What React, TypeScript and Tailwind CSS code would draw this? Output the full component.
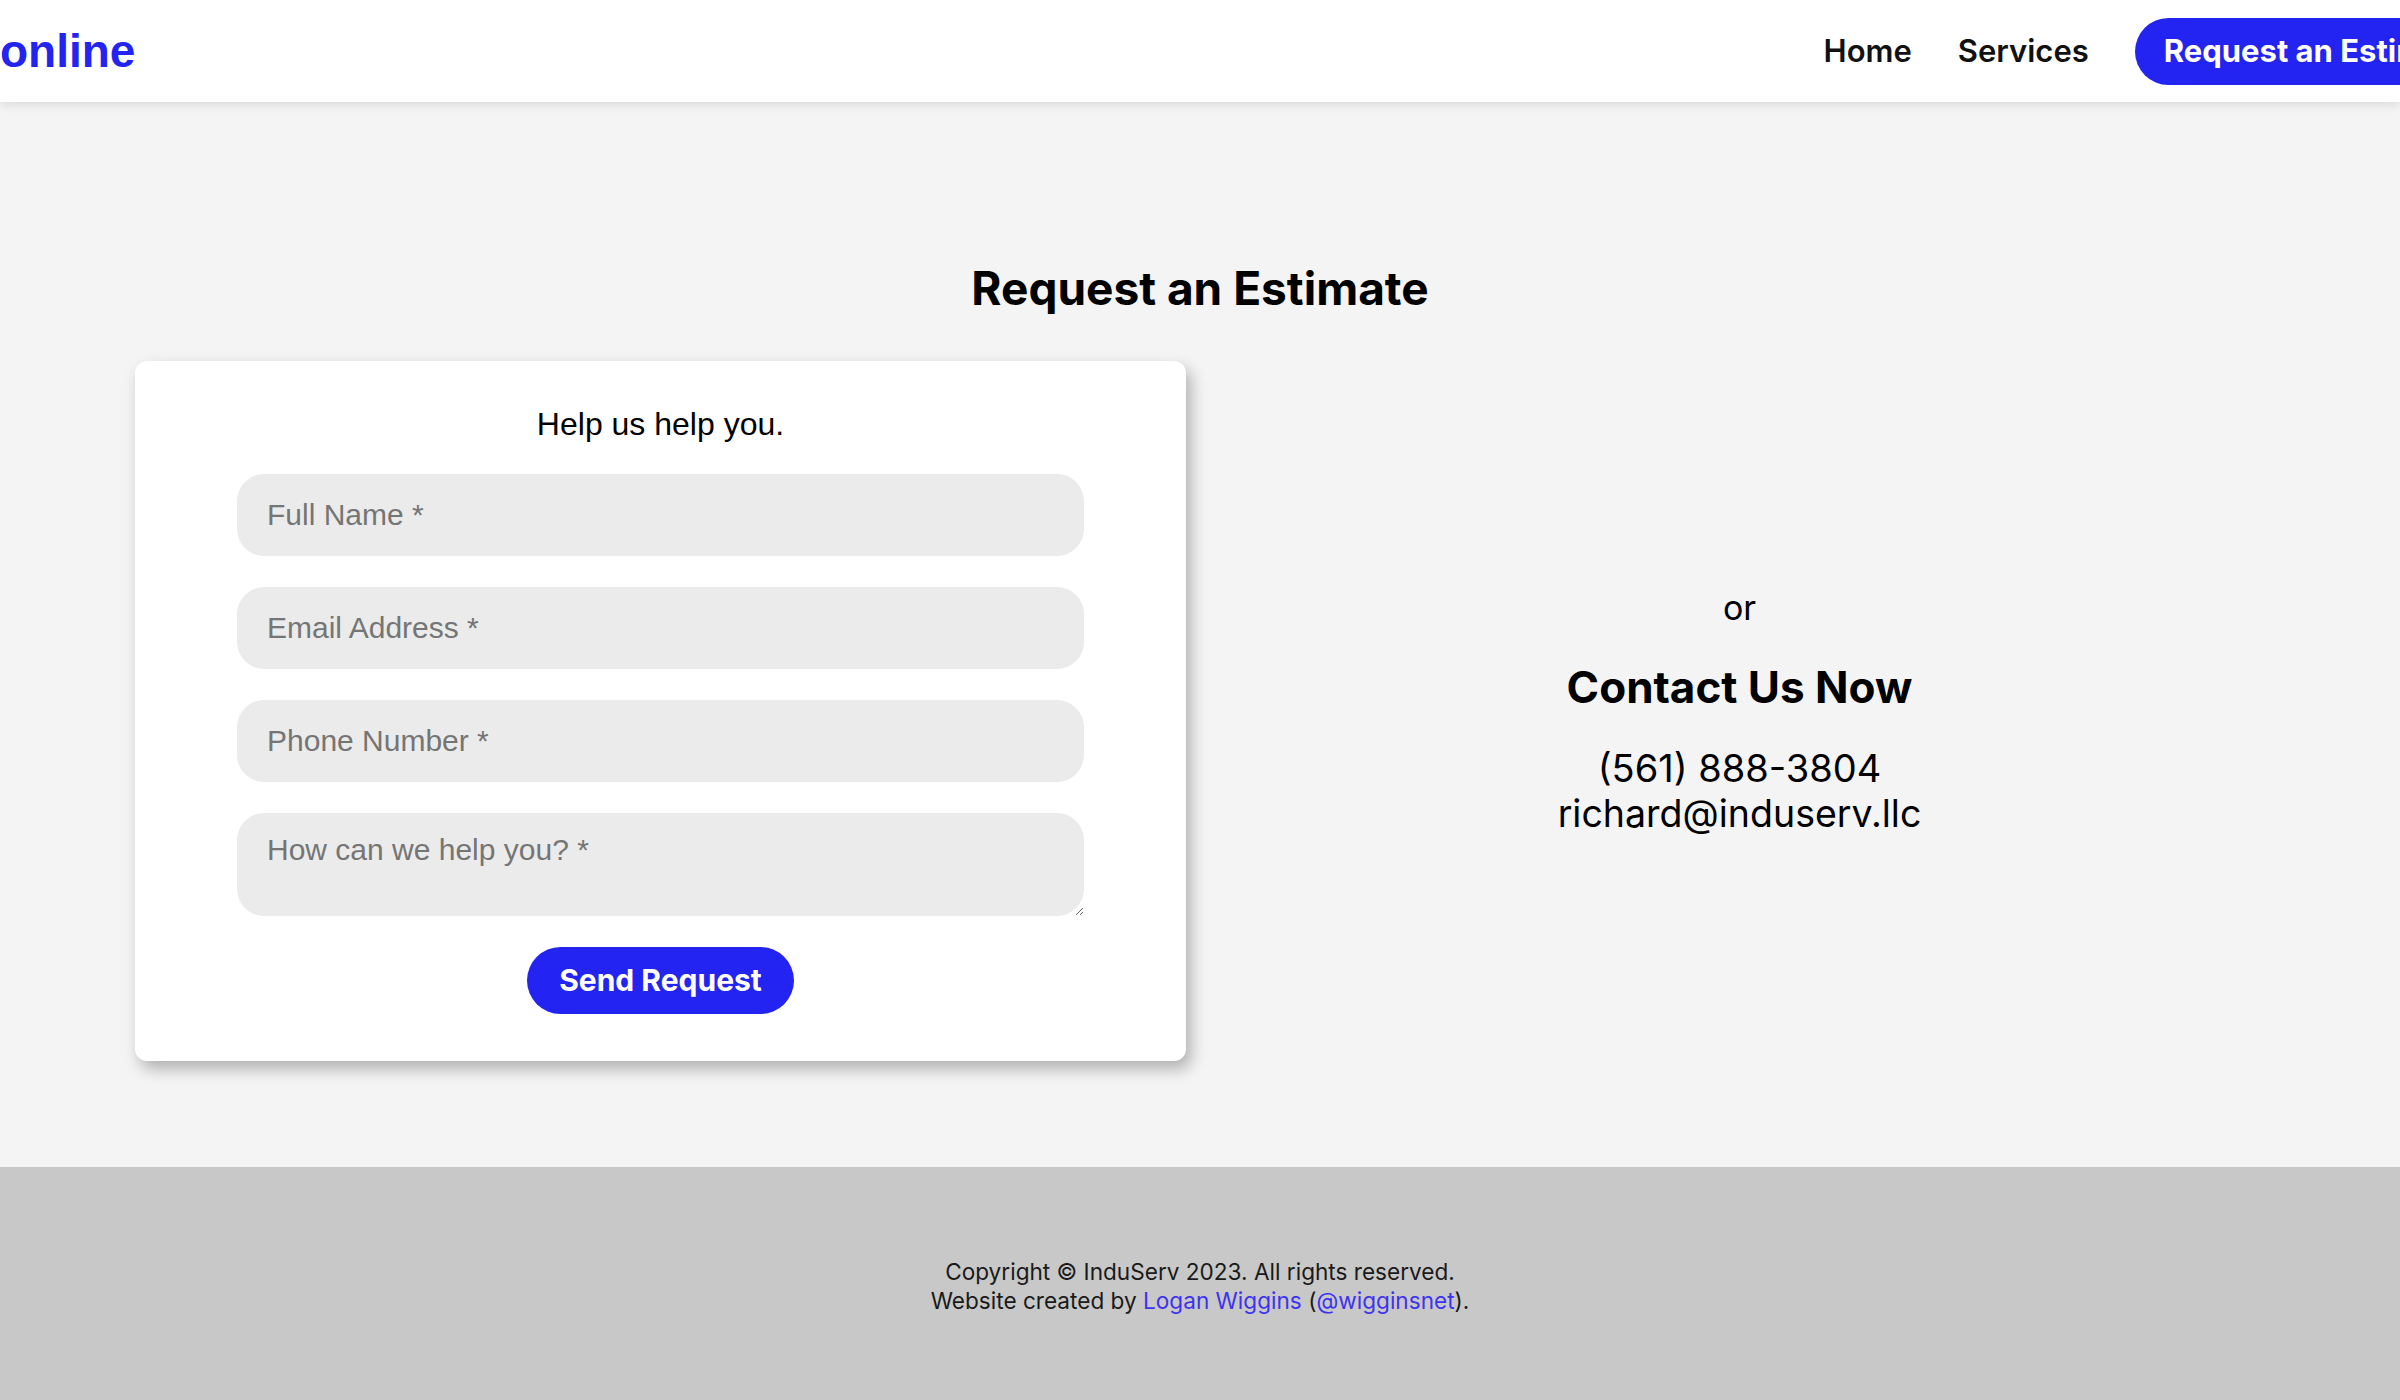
import React from "react";

const inter = "font-['Inter',sans-serif]";
const arial = "font-['Liberation_Sans',Arial,sans-serif]";

export default function App() {
  return (
    <div className={`w-full min-h-screen overflow-hidden bg-[#f4f4f4] ${inter}`}>
      <header className="relative z-10 flex h-[102px] items-center overflow-hidden bg-white shadow-[0_2px_10px_rgba(0,0,0,0.12)]">
        <span className={`${arial} text-[46px] font-bold leading-none text-[#2424f2]`}>online</span>
        <nav className="ml-auto mr-[-101px] flex shrink-0 items-center">
          <a className="text-[31px] font-semibold text-[#111]">Home</a>
          <a className="ml-[46px] text-[31px] font-semibold text-[#111]">Services</a>
          <a className="ml-[46px] flex h-[67px] shrink-0 items-center whitespace-nowrap rounded-full bg-[#2424f2] px-[29px] text-[31px] font-bold text-white">
            Request an Estimate
          </a>
        </nav>
      </header>

      <main className="pt-[158px] pb-[106px]">
        <h2 className="mb-[45px] text-center text-[46px] font-bold leading-[56px] text-black">Request an Estimate</h2>
        <div className="mx-[135px] grid grid-cols-2 gap-[28px]">
          <form className="flex flex-col items-center gap-[31px] rounded-[12px] bg-white px-[102px] pt-[45px] pb-[47px] shadow-[5px_8px_16px_rgba(0,0,0,0.28)]">
            <p className={`${arial} text-[32px] leading-[37px] text-black`}>Help us help you.</p>
            <input
              className={`${arial} h-[82px] w-full rounded-[27px] border-0 bg-[#ebebeb] px-[30px] text-[30px] text-black outline-none placeholder:text-[#757575]`}
              placeholder="Full Name *"
            />
            <input
              className={`${arial} h-[82px] w-full rounded-[27px] border-0 bg-[#ebebeb] px-[30px] text-[30px] text-black outline-none placeholder:text-[#757575]`}
              placeholder="Email Address *"
            />
            <input
              className={`${arial} h-[82px] w-full rounded-[27px] border-0 bg-[#ebebeb] px-[30px] text-[30px] text-black outline-none placeholder:text-[#757575]`}
              placeholder="Phone Number *"
            />
            <textarea
              className={`${arial} h-[103px] w-full rounded-[27px] border-0 bg-[#ebebeb] px-[30px] pt-[14px] text-[30px] text-black outline-none placeholder:text-[#757575]`}
              placeholder="How can we help you? *"
            />
            <button
              type="button"
              className="h-[67px] rounded-full bg-[#2424f2] px-[32px] text-[30px] font-bold text-white"
            >
              Send Request
            </button>
          </form>

          <div className="flex flex-col items-center justify-center pt-[3px] text-center text-black">
            <p className="text-[34px] leading-[40px]">or</p>
            <h2 className="mt-[33px] text-[44px] font-bold leading-[53px]">Contact Us Now</h2>
            <p className="mt-[31px] text-[38px] leading-[46px]">(561) 888-3804</p>
            <p className="text-[37.5px] leading-[46px]">richard@induserv.llc</p>
          </div>
        </div>
      </main>

      <footer className="bg-[#c8c8c8] pt-[90px] pb-[91px] text-center text-[22.6px] leading-[29px] text-[#1a1a1a]">
        <p>Copyright © InduServ 2023. All rights reserved.</p>
        <p>
          Website created by <a className="text-[#3d33f0]">Logan Wiggins</a> (
          <a className="text-[#3d33f0]">@wigginsnet</a>).
        </p>
      </footer>
    </div>
  );
}
